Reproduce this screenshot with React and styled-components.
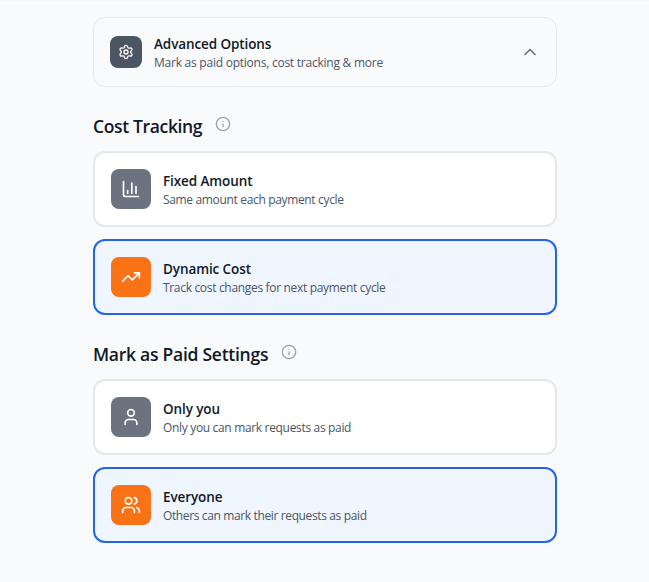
import React from "react";
import styled, { createGlobalStyle, css } from "styled-components";
import { Settings, ChevronUp, ChartColumn, TrendingUp, User, Users, Info } from "lucide-react";

const GlobalStyle = createGlobalStyle`
  *, *::before, *::after { box-sizing: border-box; }
  body {
    margin: 0;
    background: #f9fafb;
    color: #111827;
    font-family: "Segoe UI", "Open Sans", "Noto Sans", sans-serif;
  }
`;

const Page = styled.main`
  min-height: 582px;
  padding: 17px 92px 0 93px;
  overflow: hidden;
  background: linear-gradient(#f3f5f7, #f9fafc 2px);
`;

const AdvancedHeader = styled.header`
  display: flex;
  align-items: center;
  height: 70px;
  padding: 0 16px;
  border: 1px solid #e5e7eb;
  border-radius: 12px;
`;

const IconTile = styled.span`
  display: flex;
  flex: none;
  align-items: center;
  justify-content: center;
  width: ${({ $size }) => $size}px;
  height: ${({ $size }) => $size}px;
  border-radius: 8px;
  background: ${({ $color }) => $color};
  color: #fff;
`;

const Copy = styled.div`
  flex: 1;
  margin-left: 12px;
  white-space: nowrap;
`;

const Title = styled.h3`
  margin: 0;
  font-size: 13.5px;
  font-weight: 600;
  line-height: 20px;
  letter-spacing: -0.1px;
`;

const Description = styled.p`
  margin: 1px 0 -1px;
  color: #4b5563;
  font-size: 12px;
  line-height: 16px;
  letter-spacing: ${({ $track = 0 }) => $track}px;
`;

const Section = styled.section`
  padding-top: 24px;
`;

const SectionHeading = styled.div`
  display: flex;
  align-items: center;
  height: 28px;
  margin-bottom: 12px;
`;

const SectionTitle = styled.h2`
  margin: 1px 12.5px 0 0;
  font-size: 17.5px;
  font-weight: 600;
  line-height: 28px;
  letter-spacing: ${({ $track = 0 }) => $track}px;
  white-space: nowrap;
`;

const InfoMark = styled.span`
  display: flex;
  color: #9ca3af;
  margin-bottom: 2px;
`;

const OptionList = styled.div`
  display: grid;
  gap: 12px;
`;

const Option = styled.div`
  display: flex;
  align-items: center;
  height: 76px;
  padding: 0 16px;
  border: 2px solid #e5e7eb;
  border-radius: 12px;
  background: #fff;
  ${({ $selected }) => $selected && css`
    border-color: #2563eb;
    background: #eff6ff;
  `}
`;

const sections = [
  {
    title: "Cost Tracking", track: -0.35,
    options: [
      { icon: ChartColumn, title: "Fixed Amount", text: "Same amount each payment cycle", textTrack: -0.34 },
      { icon: TrendingUp, title: "Dynamic Cost", text: "Track cost changes for next payment cycle", selected: true, textTrack: -0.32 },
    ],
  },
  {
    title: "Mark as Paid Settings", track: -0.26,
    options: [
      { icon: User, title: "Only you", text: "Only you can mark requests as paid", textTrack: -0.33 },
      { icon: Users, title: "Everyone", text: "Others can mark their requests as paid", selected: true, textTrack: -0.37 },
    ],
  },
];

export default function App() {
  return (
    <>
      <GlobalStyle />
      <Page>
        <AdvancedHeader>
          <IconTile $size={32} $color="#4b5563"><Settings size={16} /></IconTile>
          <Copy>
            <Title>Advanced Options</Title>
            <Description $track={-0.24}>Mark as paid options, cost tracking &amp; more</Description>
          </Copy>
          <ChevronUp size={20} color="#6b7280" />
        </AdvancedHeader>
        {sections.map((section) => (
          <Section key={section.title}>
            <SectionHeading>
              <SectionTitle $track={section.track}>{section.title}</SectionTitle>
              <InfoMark><Info size={16} /></InfoMark>
            </SectionHeading>
            <OptionList>
              {section.options.map(({ icon: Icon, title, text, selected, textTrack }) => (
                <Option key={title} $selected={selected}>
                  <IconTile $size={40} $color={selected ? "#f97316" : "#6b7280"}><Icon size={20} /></IconTile>
                  <Copy>
                    <Title>{title}</Title>
                    <Description $track={textTrack}>{text}</Description>
                  </Copy>
                </Option>
              ))}
            </OptionList>
          </Section>
        ))}
      </Page>
    </>
  );
}
